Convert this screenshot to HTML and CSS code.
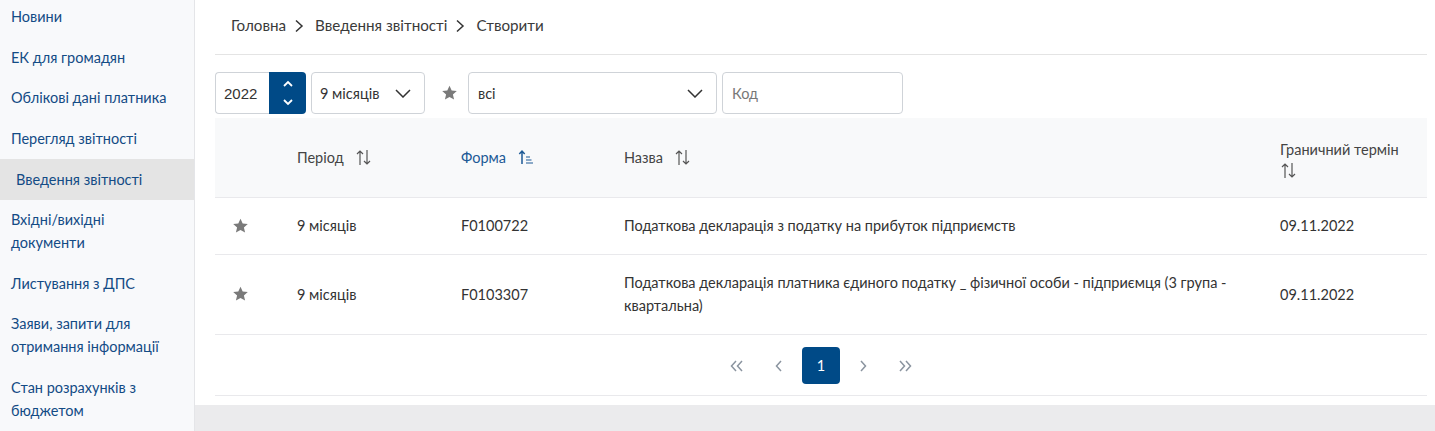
FILE: index.html
```html
<!DOCTYPE html>
<html lang="uk">
<head>
<meta charset="utf-8">
<title>Введення звітності</title>
<link rel="stylesheet" href="styles.css">
</head>
<body>
<div class="app">
  <aside class="sidebar">
    <nav class="menu">
      <a class="menu-item">Новини</a>
      <a class="menu-item">ЕК для громадян</a>
      <a class="menu-item">Облікові дані платника</a>
      <a class="menu-item">Перегляд звітності</a>
      <a class="menu-item active">Введення звітності</a>
      <a class="menu-item">Вхідні/вихідні документи</a>
      <a class="menu-item">Листування з ДПС</a>
      <a class="menu-item">Заяви, запити для отримання інформації</a>
      <a class="menu-item">Стан розрахунків з бюджетом</a>
    </nav>
  </aside>
  <div class="main-wrap">
    <main class="main">
      <div class="breadcrumb">
        <span>Головна</span>
        <svg class="bc-sep" width="10" height="14" viewBox="0 0 10 14"><polyline points="2,1.5 8,7 2,12.5" fill="none" stroke="#333" stroke-width="1.5"/></svg>
        <span>Введення звітності</span>
        <svg class="bc-sep" width="10" height="14" viewBox="0 0 10 14"><polyline points="2,1.5 8,7 2,12.5" fill="none" stroke="#333" stroke-width="1.5"/></svg>
        <span>Створити</span>
      </div>

      <div class="filters">
        <div class="year">
          <div class="year-value">2022</div>
          <div class="spin">
            <svg width="10" height="7" viewBox="0 0 10 7"><polyline points="1,6 5,2 9,6" fill="none" stroke="#fff" stroke-width="1.8"/></svg>
            <svg width="10" height="7" viewBox="0 0 10 7"><polyline points="1,1 5,5 9,1" fill="none" stroke="#fff" stroke-width="1.8"/></svg>
          </div>
        </div>
        <div class="select period-select">
          <span>9 місяців</span>
          <svg width="16" height="9" viewBox="0 0 16 9"><polyline points="1,1 8,8 15,1" fill="none" stroke="#333" stroke-width="1.5"/></svg>
        </div>
        <svg class="fav" width="17" height="16" viewBox="0 0 16 16"><polygon points="8,0.8 10.2,5.5 15.3,6 11.4,9.4 12.6,14.6 8,11.9 3.4,14.6 4.6,9.4 0.7,6 5.8,5.5" fill="#7a7a7a"/></svg>
        <div class="select type-select">
          <span>всі</span>
          <svg width="16" height="9" viewBox="0 0 16 9"><polyline points="1,1 8,8 15,1" fill="none" stroke="#333" stroke-width="1.5"/></svg>
        </div>
        <div class="code-input">Код</div>
      </div>

      <div class="table">
        <div class="tr thead">
          <div class="td"></div>
          <div class="td"><span>Період</span>
            <svg class="sort" width="16" height="17" viewBox="0 0 16 17"><path d="M4 16V2M1 5l3-3 3 3M11 1v14M8 12l3 3 3-3" fill="none" stroke="#555" stroke-width="1.2"/></svg>
          </div>
          <div class="td active-col"><span>Форма</span>
            <svg class="sort" width="16" height="17" viewBox="0 0 16 17"><path d="M4 15V2M1.3 5l2.7-3 2.7 3" fill="none" stroke="#1d5a96" stroke-width="1.5"/><path d="M8 8h4M8 11h5.5M8 14h7" fill="none" stroke="#1d5a96" stroke-width="1.1"/></svg>
          </div>
          <div class="td"><span>Назва</span>
            <svg class="sort" width="16" height="17" viewBox="0 0 16 17"><path d="M4 16V2M1 5l3-3 3 3M11 1v14M8 12l3 3 3-3" fill="none" stroke="#555" stroke-width="1.2"/></svg>
          </div>
          <div class="td deadline-head"><span>Граничний термін</span>
            <svg class="sort" width="16" height="17" viewBox="0 0 16 17"><path d="M4 16V2M1 5l3-3 3 3M11 1v14M8 12l3 3 3-3" fill="none" stroke="#555" stroke-width="1.2"/></svg>
          </div>
        </div>

        <div class="tr">
          <div class="td star-cell"><svg width="17" height="16" viewBox="0 0 16 16"><polygon points="8,0.8 10.2,5.5 15.3,6 11.4,9.4 12.6,14.6 8,11.9 3.4,14.6 4.6,9.4 0.7,6 5.8,5.5" fill="#7a7a7a"/></svg></div>
          <div class="td">9 місяців</div>
          <div class="td">F0100722</div>
          <div class="td">Податкова декларація з податку на прибуток підприємств</div>
          <div class="td">09.11.2022</div>
        </div>

        <div class="tr">
          <div class="td star-cell"><svg width="17" height="16" viewBox="0 0 16 16"><polygon points="8,0.8 10.2,5.5 15.3,6 11.4,9.4 12.6,14.6 8,11.9 3.4,14.6 4.6,9.4 0.7,6 5.8,5.5" fill="#7a7a7a"/></svg></div>
          <div class="td">9 місяців</div>
          <div class="td">F0103307</div>
          <div class="td name-long">Податкова декларація платника єдиного податку _ фізичної особи - підприємця (3 група - квартальна)</div>
          <div class="td">09.11.2022</div>
        </div>
      </div>

      <div class="pager">
        <span class="pg">
          <svg width="14" height="12" viewBox="0 0 14 12"><path d="M6 1L1.5 6 6 11M12 1L7.5 6 12 11" fill="none" stroke="#8a949f" stroke-width="1.5"/></svg>
        </span>
        <span class="pg">
          <svg width="8" height="12" viewBox="0 0 8 12"><path d="M6 1L1.5 6 6 11" fill="none" stroke="#8a949f" stroke-width="1.5"/></svg>
        </span>
        <span class="pg current">1</span>
        <span class="pg">
          <svg width="8" height="12" viewBox="0 0 8 12"><path d="M2 1l4.5 5L2 11" fill="none" stroke="#8a949f" stroke-width="1.5"/></svg>
        </span>
        <span class="pg">
          <svg width="14" height="12" viewBox="0 0 14 12"><path d="M2 1l4.5 5L2 11M8 1l4.5 5L8 11" fill="none" stroke="#8a949f" stroke-width="1.5"/></svg>
        </span>
      </div>
    </main>
  </div>
</div>
</body>
</html>
```

FILE: styles.css
```css
* { box-sizing: border-box; }

html, body {
  margin: 0;
  padding: 0;
}

body {
  background: #ebebed;
  font-family: Lato, "Noto Sans", "Liberation Sans", sans-serif;
  font-size: 14.5px;
  color: #333;
}

.app {
  display: flex;
  min-height: 100vh;
  align-items: stretch;
}

/* Sidebar */
.sidebar {
  width: 195px;
  flex: 0 0 195px;
  background: #f8f9fb;
  border-right: 1px solid #e4e5e8;
  overflow: hidden;
}

.menu {
  display: flex;
  flex-direction: column;
  margin-top: -3px;
}

.menu-item {
  display: block;
  padding: 8.3px 18px 9.3px 11px;
  line-height: 23px;
  color: #134b85;
  text-decoration: none;
}

.menu-item.active {
  background: #e4e4e4;
  padding-left: 16px;
}

/* Main */
.main-wrap {
  flex: 1;
  display: flex;
  flex-direction: column;
}

.main {
  background: #fff;
  padding: 0 8px 9px 20px;
}

.breadcrumb {
  display: flex;
  align-items: center;
  padding: 14px 16px 17px;
  line-height: 23px;
  border-bottom: 1px solid #e4e4e4;
  color: #3a3a3a;
  font-size: 15.2px;
}

.bc-sep { margin: 0 11px 0 8px; }

/* Filters */
.filters {
  display: flex;
  align-items: center;
  margin-top: 17px;
  height: 42px;
}

.year {
  display: flex;
  height: 42px;
}

.year-value {
  width: 54px;
  border: 1px solid #cfd3d8;
  border-right: none;
  border-radius: 4px 0 0 4px;
  display: flex;
  align-items: center;
  padding-left: 8px;
  font-family: "Liberation Sans", Arial, sans-serif;
  font-size: 15px;
  color: #333;
}

.spin {
  width: 37px;
  background: #004a87;
  border-radius: 0 4px 4px 0;
  display: flex;
  flex-direction: column;
  align-items: center;
  justify-content: center;
  gap: 12px;
}

.select {
  height: 42px;
  border: 1px solid #cfd3d8;
  border-radius: 4px;
  display: flex;
  align-items: center;
  justify-content: space-between;
  padding: 0 13px 0 8px;
}

.period-select {
  width: 114px;
  margin-left: 5px;
}

.fav {
  margin: 0 10px 0 16px;
}

.type-select {
  width: 249px;
  padding-left: 9px;
}

.code-input {
  width: 181px;
  height: 42px;
  margin-left: 5px;
  border: 1px solid #cfd3d8;
  border-radius: 4px;
  display: flex;
  align-items: center;
  padding-left: 9px;
  color: #777;
}

/* Table */
.table {
  margin-top: 4px;
}

.tr {
  display: grid;
  grid-template-columns: 66px 164px 163px 1fr 163px;
  border-bottom: 1px solid #e9e9ec;
}

.td {
  padding: 16px 16px 17px;
  line-height: 23px;
  display: flex;
  align-items: center;
}

.thead {
  background: #f8f9fa;
  height: 80px;
  color: #444;
}

.thead .td {
  padding-top: 0;
  padding-bottom: 0;
  flex-wrap: wrap;
  align-content: center;
}

.sort {
  margin-left: 12px;
}

.active-col {
  color: #1d5a96;
}

.deadline-head {
  padding-left: 16px;
  padding-right: 20px;
  line-height: 25px;
}

.deadline-head .sort {
  flex-basis: 100%;
  width: 16px;
  max-width: 16px;
  margin-left: 1px;
}

.star-cell {
  justify-content: center;
  padding-left: 14px;
  padding-right: 30px;
}

/* Pager */
.pager {
  display: flex;
  justify-content: center;
  gap: 4px;
  padding: 12px 0 11px;
  border-bottom: 1px solid #e9e9ec;
}

.pg {
  width: 38px;
  height: 37px;
  display: flex;
  align-items: center;
  justify-content: center;
  border-radius: 4px;
}

.pg.current {
  background: #004a87;
  color: #fff;
}
```
